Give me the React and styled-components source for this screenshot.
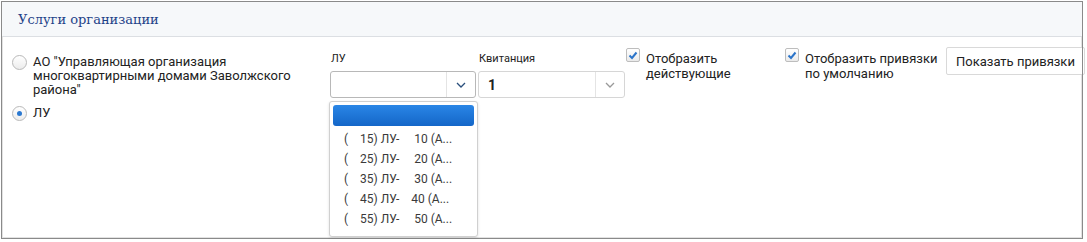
import React from 'react';
import styled, { createGlobalStyle } from 'styled-components';

const Global = createGlobalStyle`
    body {
        margin: 0;
        background: #fff;
        font-family: Roboto, "Liberation Sans", Arial, sans-serif;
        color: #222;
    }
`;

const Panel = styled.div`
    position: relative;
    margin: 1px 0 0 1px;
    width: 1082px;
    height: 238px;
    border: 1px solid #8a8a8a;
    box-shadow: inset 1px 1px 0 #e2e2e2, inset -1px -1px 0 #e2e2e2;
    box-sizing: border-box;
    &::after {
        content: '';
        position: absolute;
        top: -1px;
        right: -1px;
        bottom: -1px;
        border-right: 1px solid #8a8a8a;
        z-index: 3;
        pointer-events: none;
    }
`;

const Header = styled.div`
    height: 35px;
    background: #f6f8fa;
    border-bottom: 1px solid #dcdfe3;
    box-sizing: border-box;
    padding: 10px 0 0 16px;
    font-family: "DejaVu Serif", "Liberation Serif", serif;
    font-size: 13px;
    color: #1f4389;
`;

const Body = styled.div`
    display: flex;
    align-items: flex-start;
    padding: 13px 0 0 10px;
    & > * {
        flex: none;
    }
`;

const RadioGroup = styled.div`
    width: 318px;
    margin-top: 5px;
    display: flex;
    flex-direction: column;
    gap: 9px;
`;

const RadioRow = styled.label`
    display: flex;
    align-items: flex-start;
    gap: 6px;
    font-size: 13px;
    line-height: 14px;
`;

const RadioDot = styled.span`
    flex: none;
    width: 13px;
    height: 13px;
    border-radius: 50%;
    border: 1px solid #b9b9b9;
    background: linear-gradient(#fff, #ececec);
    display: flex;
    align-items: center;
    justify-content: center;
    &::after {
        content: '';
        width: 5px;
        height: 5px;
        border-radius: 50%;
        background: ${p => (p.$on ? '#2a78d0' : 'transparent')};
    }
`;

const Field = styled.div`
    position: relative;
    width: ${p => p.$w}px;
    margin-right: ${p => p.$gap}px;
`;

const FieldLabel = styled.div`
    font-size: 11px;
    line-height: 13px;
    margin: 2px 0 6px 1px;
`;

const Select = styled.div`
    height: 27px;
    border: 1px solid ${p => (p.$open ? '#b8b8b8' : '#d6d6d6')};
    border-radius: 3px;
    display: flex;
    box-sizing: border-box;
    background: #fff;
`;

const SelectValue = styled.div`
    flex: 1;
    padding-left: 9px;
    font-size: 14px;
    font-weight: 700;
    line-height: 26px;
`;

const SelectArrow = styled.div`
    width: 28px;
    border-left: 1px solid #e4e4e4;
    display: flex;
    align-items: center;
    justify-content: center;
    color: ${p => p.$color};
`;

const Dropdown = styled.div`
    position: absolute;
    left: -1px;
    top: 51px;
    width: 149px;
    height: 136px;
    background: #fff;
    border: 1px solid #d0d0d0;
    border-radius: 3px;
    box-shadow: 0 1px 3px rgba(0, 0, 0, 0.12);
    padding: 3px 3px 0;
    box-sizing: border-box;
    z-index: 2;
`;

const Option = styled.div`
    line-height: 20px;
    font-size: 12px;
    color: #3a3a3a;
    white-space: pre;
    padding-left: 11px;
    border-radius: ${p => (p.$active ? '3px' : '0')};
    background: ${p => (p.$active ? 'linear-gradient(#2a86e6, #1466c8)' : 'transparent')};
    margin-bottom: ${p => (p.$active ? '3px' : '0')};
    height: ${p => (p.$active ? '21px' : '20px')};
`;

const Check = styled.label`
    display: flex;
    align-items: flex-start;
    gap: 6px;
    width: ${p => p.$w}px;
    font-size: 13px;
    line-height: 15px;
    margin-top: 1px;
`;

const CheckBox = styled.span`
    flex: none;
    width: 12px;
    height: 12px;
    margin-top: -3px;
    border: 1px solid #bdbdbd;
    border-radius: 2px;
    background: linear-gradient(#fff, #eaeaea);
    display: flex;
    align-items: center;
    justify-content: center;
`;

const Button = styled.button`
    height: 28px;
    padding: 0 9px;
    border: 1px solid #d9d9d9;
    border-radius: 2px;
    background: #fff;
    font-family: inherit;
    font-size: 13px;
    color: #222;
    margin-top: -3px;
    white-space: nowrap;
`;

const Chevron = () => (
    <svg width="10" height="6" viewBox="0 0 10 6">
        <path d="M1 1l4 4 4-4" fill="none" stroke="currentColor" strokeWidth="1.3" />
    </svg>
);

const Tick = () => (
    <svg width="10" height="9" viewBox="0 0 10 9">
        <path d="M1.5 4.5l2.5 2.5 4.5-5.5" fill="none" stroke="#2b74c9" strokeWidth="2" />
    </svg>
);

const options = [
    '(    15) ЛУ-     10 (А...',
    '(    25) ЛУ-     20 (А...',
    '(    35) ЛУ-     30 (А...',
    '(    45) ЛУ-    40 (А...',
    '(    55) ЛУ-     50 (А...',
];

export default function App() {
    return (
        <>
            <Global />
            <Panel>
                <Header>Услуги организации</Header>
                <Body>
                    <RadioGroup>
                        <RadioRow>
                            <RadioDot />
                            <span>АО "Управляющая организация многоквартирными домами Заволжского района"</span>
                        </RadioRow>
                        <RadioRow>
                            <RadioDot $on />
                            <span>ЛУ</span>
                        </RadioRow>
                    </RadioGroup>

                    <Field $w={146} $gap={2}>
                        <FieldLabel>ЛУ</FieldLabel>
                        <Select $open>
                            <SelectValue />
                            <SelectArrow $color="#2a4f7c"><Chevron /></SelectArrow>
                        </Select>
                        <Dropdown>
                            <Option $active> </Option>
                            {options.map(o => <Option key={o}>{o}</Option>)}
                        </Dropdown>
                    </Field>

                    <Field $w={147} $gap={1}>
                        <FieldLabel>Квитанция</FieldLabel>
                        <Select>
                            <SelectValue>1</SelectValue>
                            <SelectArrow $color="#999"><Chevron /></SelectArrow>
                        </Select>
                    </Field>

                    <Check $w={159}>
                        <CheckBox><Tick /></CheckBox>
                        <span>Отобразить<br />действующие</span>
                    </Check>

                    <Check $w={161}>
                        <CheckBox><Tick /></CheckBox>
                        <span>Отобразить привязки<br />по умолчанию</span>
                    </Check>

                    <Button>Показать привязки</Button>
                </Body>
            </Panel>
        </>
    );
}
